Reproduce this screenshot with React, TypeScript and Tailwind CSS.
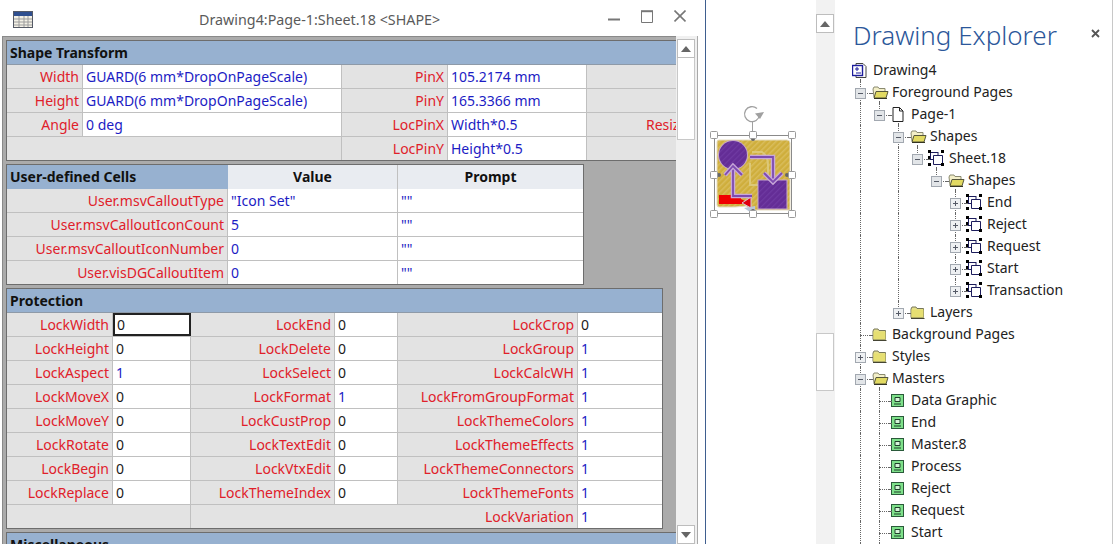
import type { ReactNode } from "react";

const FONT = "font-['Noto_Sans','Open_Sans',sans-serif]";

function Label({ text, wide }: { text?: string; wide?: boolean }) {
  return (
    <div
      className={
        "h-full min-w-0 overflow-hidden whitespace-nowrap border-r border-[#c0c0c0] bg-[#e3e3e3] pr-[3px] text-right leading-[23px] text-[#e0202a] " +
        (wide ? "col-span-3" : "")
      }
    >
      {text}
    </div>
  );
}

function Value({ text, tone = "blue", focus }: { text?: string; tone?: "blue" | "black"; focus?: boolean }) {
  return (
    <div
      className={
        "h-full min-w-0 overflow-hidden whitespace-nowrap bg-white " +
        (tone === "blue" ? "text-[#1c1cc4] " : "text-[#1a1a1a] ") +
        (focus
          ? "border-2 border-[#222222] pl-[2px] leading-[19px]"
          : "border-r border-[#c0c0c0] pl-[3px] leading-[23px] last:border-r-0")
      }
    >
      {text}
    </div>
  );
}

function Blank({ wide }: { wide?: boolean }) {
  return <div className={"h-full border-r border-[#c0c0c0] bg-[#e3e3e3] " + (wide ? "col-span-2" : "")} />;
}

function Row({ cols, children }: { cols: string; children: ReactNode }) {
  return <div className={"grid h-6 border-b border-[#c0c0c0] last:h-[23px] last:border-b-0 " + cols}>{children}</div>;
}

function Head({ text }: { text: string }) {
  return <div className="h-6 border-b border-[#8e9aa8] bg-[#97b1d0] pl-[3px] font-bold leading-[24px] text-[#111111]">{text}</div>;
}

const T1 = "grid-cols-[76px_259px_106px_139px_142px_76px]";
const T2 = "grid-cols-[221px_170px_185px]";
const T3 = "grid-cols-[106px_78px_144px_63px_180px_84px]";

const transformRows = [
  ["Width", "GUARD(6 mm*DropOnPageScale)", "PinX", "105.2174 mm", ""],
  ["Height", "GUARD(6 mm*DropOnPageScale)", "PinY", "165.3366 mm", ""],
  ["Angle", "0 deg", "LocPinX", "Width*0.5", "ResizeMode"],
];

const userRows = [
  ["User.msvCalloutType", '"Icon Set"'],
  ["User.msvCalloutIconCount", "5"],
  ["User.msvCalloutIconNumber", "0"],
  ["User.visDGCalloutItem", "0"],
];

const lockRows = [
  ["LockWidth", "0", "LockEnd", "0", "LockCrop", "0"],
  ["LockHeight", "0", "LockDelete", "0", "LockGroup", "1"],
  ["LockAspect", "1", "LockSelect", "0", "LockCalcWH", "1"],
  ["LockMoveX", "0", "LockFormat", "1", "LockFromGroupFormat", "1"],
  ["LockMoveY", "0", "LockCustProp", "0", "LockThemeColors", "1"],
  ["LockRotate", "0", "LockTextEdit", "0", "LockThemeEffects", "1"],
  ["LockBegin", "0", "LockVtxEdit", "0", "LockThemeConnectors", "1"],
  ["LockReplace", "0", "LockThemeIndex", "0", "LockThemeFonts", "1"],
];

function tone(v: string) {
  return v === "1" ? "blue" : "black";
}

function ShapeSheet() {
  return (
    <div className="flex min-h-0 min-w-0 flex-1 flex-col gap-[3px] overflow-hidden border-l border-t border-[#8a8a8a] bg-[#ababab] pl-[3px] pt-[3px] text-[14px]">
      <div className="w-[800px] shrink-0 border border-[#6d6d6d]">
        <Head text="Shape Transform" />
        {transformRows.map((r) => (
          <Row key={r[0]} cols={T1}>
            <Label text={r[0]} />
            <Value text={r[1]} />
            <Label text={r[2]} />
            <Value text={r[3]} />
            <Label text={r[4]} />
            <Value />
          </Row>
        ))}
        <Row cols={T1}>
          <Blank wide />
          <Label text="LocPinY" />
          <Value text="Height*0.5" />
          <Blank />
          <Value />
        </Row>
      </div>

      <div className="w-[578px] shrink-0 border border-[#6d6d6d]">
        <div className={"grid h-6 border-b border-[#8e9aa8] " + T2}>
          <div className="bg-[#97b1d0] pl-[3px] font-bold leading-[24px] text-[#111111]">User-defined Cells</div>
          <div className="border-r border-[#c0c0c0] bg-[#e9ecf1] text-center font-bold leading-[24px] text-[#111111]">Value</div>
          <div className="bg-[#e9ecf1] text-center font-bold leading-[24px] text-[#111111]">Prompt</div>
        </div>
        {userRows.map((r) => (
          <Row key={r[0]} cols={T2}>
            <Label text={r[0]} />
            <Value text={r[1]} />
            <Value text={'""'} />
          </Row>
        ))}
      </div>

      <div className="w-[657px] shrink-0 border border-[#6d6d6d]">
        <Head text="Protection" />
        {lockRows.map((r, i) => (
          <Row key={r[0]} cols={T3}>
            <Label text={r[0]} />
            <Value text={r[1]} tone={tone(r[1])} focus={i === 0} />
            <Label text={r[2]} />
            <Value text={r[3]} tone={tone(r[3])} />
            <Label text={r[4]} />
            <Value text={r[5]} tone={tone(r[5])} />
          </Row>
        ))}
        <Row cols={T3}>
          <Blank wide />
          <Label text="LockVariation" wide />
          <Value text="1" />
        </Row>
      </div>

      <div className="w-[800px] shrink-0 border border-[#6d6d6d]">
        <Head text="Miscellaneous" />
      </div>
    </div>
  );
}

function Arrow({ down }: { down?: boolean }) {
  return (
    <svg width="10" height="6" viewBox="0 0 10 6">
      <path d={down ? "M0 0H10L5 6Z" : "M5 0L10 6H0Z"} fill="#666666" />
    </svg>
  );
}

function ArrowButton({ down }: { down?: boolean }) {
  return (
    <div className="flex h-[19px] w-[18px] items-center justify-center border border-[#bdbdbd] bg-white">
      <Arrow down={down} />
    </div>
  );
}

function AppIcon() {
  return (
    <svg width="20" height="17" viewBox="0 0 20 17">
      <rect x="0.5" y="0.5" width="19" height="16" fill="#f4f1e6" stroke="#555a66" />
      <rect x="1" y="1" width="18" height="4" fill="#2f4f8f" />
      <path d="M1 8H19M1 11H19M1 14H19M6 5V16M11 5V16M15 5V16" stroke="#9c9c9c" />
    </svg>
  );
}

function ShapeWindow() {
  return (
    <div className="flex h-[544px] w-[706px] shrink-0 flex-col border-r border-[#3f5f8f] bg-white">
      <div className="flex h-9 shrink-0 items-start pl-[13px]">
        <div className="mt-[11px]">
          <AppIcon />
        </div>
        <div className="ml-[166px] mt-[9px] whitespace-nowrap text-[14.3px] leading-[22px] text-[#5a5a5a]">
          {"Drawing4:Page-1:Sheet.18 <SHAPE>"}
        </div>
        <div className="ml-auto mr-[19px] mt-[10px] flex items-start gap-[21px]">
          <svg width="12" height="13" viewBox="0 0 12 13">
            <path d="M0 9.5H12" stroke="#777777" strokeWidth="2" />
          </svg>
          <svg width="12" height="13" viewBox="0 0 12 13">
            <path d="M0.5 1.5H11.5V12.5H0.5Z" fill="none" stroke="#777777" />
            <path d="M0 1.2H12" stroke="#777777" strokeWidth="2" />
          </svg>
          <svg width="12" height="13" viewBox="0 0 12 13">
            <path d="M0.5 0.5L11.5 11.5M11.5 0.5L0.5 11.5" stroke="#777777" strokeWidth="1.6" />
          </svg>
        </div>
      </div>
      <div className="ml-[2px] mr-[7px] flex min-h-0 flex-1">
        <ShapeSheet />
        <div className="flex w-[22px] shrink-0 flex-col items-start border-r border-[#a9a9a9] bg-[#f0f0f0] pl-px pt-[3px]">
          <ArrowButton />
          <div className="h-[82px] w-[18px] border border-t-0 border-[#c8c8c8] bg-white" />
          <div className="mt-auto">
            <ArrowButton down />
          </div>
        </div>
      </div>
    </div>
  );
}

function Handle({ x, y }: { x: number; y: number }) {
  return <rect x={x - 3.5} y={y - 3.5} width="7" height="7" rx="1" fill="#ffffff" stroke="#9a9a9a" />;
}

function ShapeDrawing() {
  const handles = [
    [714, 135],
    [753, 135],
    [792, 135],
    [714, 175],
    [792, 175],
    [714, 214],
    [753, 214],
    [792, 214],
  ];
  return (
    <svg width="100" height="120" viewBox="706 102 100 120" className="mt-[102px]">
      <defs>
        <pattern id="gold" width="4" height="4" patternUnits="userSpaceOnUse" patternTransform="rotate(45)">
          <rect width="4" height="4" fill="#cfae3c" />
          <rect width="1.5" height="4" fill="#d9bd5c" />
        </pattern>
        <pattern id="violet" width="4" height="4" patternUnits="userSpaceOnUse" patternTransform="rotate(45)">
          <rect width="4" height="4" fill="#642d96" />
          <rect width="1.2" height="4" fill="#6f3aa2" />
        </pattern>
      </defs>
      <path d="M757 108.5A7.5 7.5 0 1 0 759.5 115" fill="none" stroke="#a0a0a0" strokeWidth="1.3" />
      <path d="M755 113.5L764 112L760 119Z" fill="#a0a0a0" />
      <path d="M752.5 122V132" stroke="#a0a0a0" />
      <rect x="714.5" y="135.5" width="77" height="78" fill="none" stroke="#8a8a8a" />
      <path d="M719 140H787Q790 140 790 143V210H752L746 206L735 207H719Q717 207 717 205V142Q717 140 719 140Z" fill="url(#gold)" stroke="#e5dcc0" />
      <path d="M752 152H762Q768 156 768 165V176M750 163V185H762" fill="none" stroke="#dcc878" strokeWidth="2" />
      <rect x="719" y="195" width="22" height="9" fill="#f00000" />
      <path d="M733 195L751 204L747 204L719 204Z" fill="#f00000" />
      <path d="M751 197V208L742 203Z" fill="#e00010" stroke="#d8c4d8" />
      <path d="M744 208L755 206V212H750Z" fill="#b9c6d8" />
      <circle cx="733" cy="155" r="15" fill="#c7a9c9" />
      <circle cx="733" cy="155" r="14" fill="url(#violet)" />
      <rect x="757.5" y="179.5" width="30" height="30" fill="#c7a9c9" />
      <rect x="758.5" y="180.5" width="28" height="28" fill="url(#violet)" />
      <path d="M750 157H773V181" fill="none" stroke="#c8a8d8" strokeWidth="4.5" />
      <path d="M750 157H773V181" fill="none" stroke="#7d4ab0" strokeWidth="1.8" />
      <path d="M764 173L773 182L782 173" fill="none" stroke="#c8a8d8" strokeWidth="4.5" />
      <path d="M764 173L773 182L782 173" fill="none" stroke="#7d4ab0" strokeWidth="1.8" />
      <path d="M752 196H733V167" fill="none" stroke="#c8a8d8" strokeWidth="4.5" />
      <path d="M752 196H733V167" fill="none" stroke="#7d4ab0" strokeWidth="1.8" />
      <path d="M725 175L733 166L742 175" fill="none" stroke="#c8a8d8" strokeWidth="4.5" />
      <path d="M725 175L733 166L742 175" fill="none" stroke="#7d4ab0" strokeWidth="1.8" />
      <circle cx="753" cy="139" r="2" fill="#666666" />
      <circle cx="753" cy="211" r="2" fill="#666666" />
      <circle cx="719" cy="175" r="2" fill="#666666" />
      <circle cx="787" cy="175" r="2" fill="#666666" />
      {handles.map(([x, y]) => (
        <Handle key={x + "-" + y} x={x} y={y} />
      ))}
    </svg>
  );
}

function DocIcon() {
  return (
    <svg width="15" height="15" viewBox="0 0 15 15" className="ml-px">
      <path d="M4 0.5H11L14 3.5V14.5H4Z" fill="#ffffff" stroke="#444444" />
      <rect x="0.5" y="2.5" width="10" height="10" fill="#ffffff" stroke="#1c1c9c" strokeWidth="1.4" />
      <path d="M3 6H7M5 4V8M4 10H9" stroke="#1c1c9c" />
    </svg>
  );
}

function FolderOpen() {
  return (
    <svg width="17" height="13" viewBox="0 0 17 13" className="ml-[2px]">
      <path d="M1 3L2 1H6L7 2.5H13V11H2Z" fill="#f3efc8" stroke="#8a8a70" />
      <path d="M4 5.5H16L14 12H2Z" fill="#e2da62" stroke="#56563c" />
      <path d="M2 12.5H15" stroke="#333322" />
    </svg>
  );
}

function FolderClosed() {
  return (
    <svg width="15" height="13" viewBox="0 0 15 13" className="ml-[2px]">
      <path d="M1 3L2 1H6L7 2.5H13.5V11.5H1Z" fill="#e6e08a" stroke="#77775a" />
      <rect x="1.5" y="3.5" width="12" height="8" fill="#e6df72" />
      <path d="M1 12.5H14.5" stroke="#444433" />
    </svg>
  );
}

function PageIcon() {
  return (
    <svg width="12" height="15" viewBox="0 0 12 15" className="ml-[3px]">
      <path d="M1 0.5H7.5L11 4V14.5H1Z M7.5 0.5V4H11" fill="#ffffff" stroke="#222222" />
    </svg>
  );
}

function SheetIcon() {
  return (
    <svg width="16" height="16" viewBox="0 0 16 16" className="ml-px">
      <path d="M2 2.5H10M2.5 2V10M2 9.5H5M10 5.5H14.5M5.5 5.5V14.5H14.5V5.5M5.5 5.5H10V2" fill="none" stroke="#1c1c5c" />
      <path d="M0 0H3V3H0ZM13 0H16V3H13ZM0 13H3V16H0ZM13 13H16V16H13ZM0 6H2V9H0Z" fill="#000000" />
    </svg>
  );
}

function MasterIcon() {
  return (
    <svg width="13" height="13" viewBox="0 0 13 13" className="ml-[2px]">
      <rect x="0.5" y="0.5" width="12" height="12" fill="#7ee08a" stroke="#2a5a3a" />
      <path d="M4 3.5H9V7.5H4Z" fill="#d6f5da" stroke="#1f3f2a" />
      <path d="M3 10H10" stroke="#1f3f2a" />
    </svg>
  );
}

type Kind = "doc" | "open" | "closed" | "page" | "sheet" | "master";

type TreeNode = {
  label: string;
  kind: Kind;
  children?: TreeNode[];
  collapsed?: boolean;
};

const icons: Record<Kind, ReactNode> = {
  doc: <DocIcon />,
  open: <FolderOpen />,
  closed: <FolderClosed />,
  page: <PageIcon />,
  sheet: <SheetIcon />,
  master: <MasterIcon />,
};

const inner = (label: string): TreeNode => ({ label, kind: "sheet", collapsed: true });
const master = (label: string): TreeNode => ({ label, kind: "master" });

const tree: TreeNode = {
  label: "Drawing4",
  kind: "doc",
  children: [
    {
      label: "Foreground Pages",
      kind: "open",
      children: [
        {
          label: "Page-1",
          kind: "page",
          children: [
            {
              label: "Shapes",
              kind: "open",
              children: [
                {
                  label: "Sheet.18",
                  kind: "sheet",
                  children: [
                    {
                      label: "Shapes",
                      kind: "open",
                      children: ["End", "Reject", "Request", "Start", "Transaction"].map(inner),
                    },
                  ],
                },
              ],
            },
            { label: "Layers", kind: "closed", collapsed: true },
          ],
        },
      ],
    },
    { label: "Background Pages", kind: "closed" },
    { label: "Styles", kind: "closed", collapsed: true },
    {
      label: "Masters",
      kind: "open",
      children: ["Data Graphic", "End", "Master.8", "Process", "Reject", "Request", "Start", "Transaction"].map(master),
    },
    { label: "Fonts", kind: "closed", collapsed: true },
  ],
};

function Expander({ open }: { open: boolean }) {
  return (
    <svg width="11" height="11" viewBox="0 0 11 11" className="absolute left-[4px] top-[7px]">
      <rect x="0.5" y="0.5" width="10" height="10" fill={open ? "#e2e5e8" : "#eef0f2"} stroke="#a2a8b0" />
      <path d={open ? "M3 5.5H8" : "M3 5.5H8M5.5 3V8"} stroke="#555a66" />
    </svg>
  );
}

function Branch({ node, guides, last, root }: { node: TreeNode; guides: boolean[]; last: boolean; root?: boolean }) {
  const open = !!node.children;
  return (
    <>
      <div className="flex h-[22px] items-stretch">
        {guides.map((g, i) => (
          <span key={i} className="relative w-[19px] shrink-0">
            {g && <span className="absolute bottom-0 left-[9px] top-0 border-l border-dotted border-[#666666]" />}
          </span>
        ))}
        {!root && (
          <span className="relative w-[19px] shrink-0">
            <span className={"absolute left-[9px] top-0 border-l border-dotted border-[#666666] " + (last ? "h-[12px]" : "bottom-0")} />
            <span className="absolute left-[9px] right-0 top-[12px] border-t border-dotted border-[#666666]" />
            {(open || node.collapsed) && <Expander open={open} />}
          </span>
        )}
        <span className="relative flex w-[22px] shrink-0 items-center">
          {!root && <span className="absolute left-0 top-[12px] w-[2px] border-t border-dotted border-[#666666]" />}
          {icons[node.kind]}
          {open && <span className="absolute bottom-0 left-[9px] h-[2px] border-l border-dotted border-[#666666]" />}
        </span>
        <span className="whitespace-nowrap text-[14px] leading-[22px] text-[#222222]">{node.label}</span>
      </div>
      {node.children?.map((c, i) => (
        <Branch
          key={c.label + i}
          node={c}
          guides={root ? [] : [...guides, !last]}
          last={i === node.children!.length - 1}
        />
      ))}
    </>
  );
}

function DrawingExplorer() {
  return (
    <div className="mr-[1px] flex h-[544px] min-w-0 flex-1 flex-col overflow-hidden border-r border-[#c8c8c8] bg-white">
      <div className="flex h-[59px] shrink-0 items-start pl-[18px]">
        <div className="mt-[17px] whitespace-nowrap text-[26px] font-light leading-[36px] text-[#2b579a]">Drawing Explorer</div>
        <svg width="9" height="9" viewBox="0 0 9 9" className="ml-auto mr-[12px] mt-[29px]">
          <path d="M1 1L8 8M8 1L1 8" stroke="#555555" strokeWidth="1.8" />
        </svg>
      </div>
      <div className="pl-[16px]">
        <Branch node={tree} guides={[]} last root />
      </div>
    </div>
  );
}

export default function App() {
  return (
    <div className={"flex h-[544px] w-[1114px] overflow-hidden bg-white " + FONT}>
      <ShapeWindow />
      <div className="w-[110px] shrink-0 bg-white">
        <ShapeDrawing />
      </div>
      <div className="flex h-full w-[19px] shrink-0 flex-col bg-[#f2f2f2] pt-[14px]">
        <ArrowButton />
        <div className="mt-[300px] h-[58px] w-[18px] border border-[#c8c8c8] bg-white" />
      </div>
      <DrawingExplorer />
    </div>
  );
}
